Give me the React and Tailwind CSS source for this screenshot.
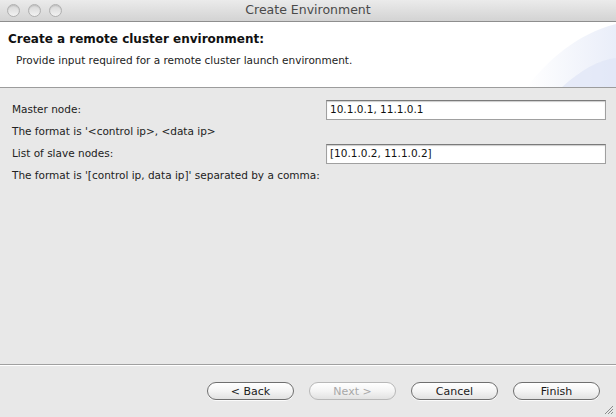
import React from 'react';

function TrafficLight() {
  return (
    <span className="w-[13px] h-[13px] rounded-full border border-[#b0b0b0] bg-gradient-to-b from-[#d6d6d6] to-[#f2f2f2] shadow-[inset_0_1px_1px_rgba(0,0,0,0.12)]" />
  );
}

function MacButton({ children, disabled }) {
  return (
    <button
      disabled={disabled}
      className={
        'w-[87px] h-[18px] rounded-full border text-[11px] leading-none flex items-center justify-center bg-gradient-to-b from-white via-[#f4f4f4] to-[#e2e2e2] ' +
        (disabled
          ? 'border-[#b8b8b8] text-[#a8a8a8]'
          : 'border-[#6f6f6f] text-[#1a1a1a] shadow-[0_1px_0_rgba(255,255,255,0.8)]')
      }
    >
      {children}
    </button>
  );
}

function Field({ label, value, hint }) {
  return (
    <>
      <div className="flex items-center h-[22px]">
        <span className="flex-1">{label}</span>
        <div className="w-[280px] h-[20px] bg-white border border-[#a0a0a0] border-t-[#7a7a7a] shadow-[inset_0_1px_1px_rgba(0,0,0,0.2)] flex items-center px-[3px] text-[#111]">
          {value}
        </div>
      </div>
      <div className="h-[22px] flex items-center">{hint}</div>
    </>
  );
}

export default function App() {
  return (
    <div
      className="w-[616px] h-[417px] flex flex-col bg-[#e8e8e8] text-[12px] text-[#222] overflow-hidden"
      style={{ fontFamily: '"Lucida Grande", "DejaVu Sans", sans-serif' }}
    >
      {/* Title bar */}
      <div className="h-[22px] shrink-0 flex items-center relative bg-gradient-to-b from-[#ebebeb] to-[#d3d3d3] border-b border-[#8e8e8e]">
        <div className="flex gap-[8px] pl-[7px]">
          <TrafficLight />
          <TrafficLight />
          <TrafficLight />
        </div>
        <div className="absolute inset-0 flex items-center justify-center text-[12.5px] text-[#4a4a4a]">
          Create Environment
        </div>
      </div>

      {/* Header */}
      <div className="h-[66px] shrink-0 bg-white relative overflow-hidden border-b border-[#9c9c9c]">
        <svg className="absolute right-0 top-0" width="100" height="66" viewBox="0 0 100 66">
          <defs>
            <linearGradient id="g1" x1="0" y1="0" x2="1" y2="0">
              <stop offset="0" stopColor="#ffffff" />
              <stop offset="1" stopColor="#dbe2f5" />
            </linearGradient>
          </defs>
          <path d="M10 66 C30 40 60 12 100 2 L100 66 Z" fill="url(#g1)" opacity="0.6" />
          <path d="M45 66 C65 48 82 38 100 36 L100 66 Z" fill="#e0e6f6" opacity="0.7" />
        </svg>
        <div className="relative pl-[8px] pt-[8px] font-bold text-[#111] text-[12px]">
          Create a remote cluster environment:
        </div>
        <div className="relative pl-[16px] pt-[5px] text-[10.5px] text-[#222]">
          Provide input required for a remote cluster launch environment.
        </div>
      </div>

      {/* Body */}
      <div className="flex-1 pl-[12px] pr-[10px] pt-[11px] text-[10.5px]">
        <Field label="Master node:" value="10.1.0.1, 11.1.0.1" hint="The format is '<control ip>, <data ip>" />
        <Field
          label="List of slave nodes:"
          value="[10.1.0.2, 11.1.0.2]"
          hint="The format is '[control ip, data ip]' separated by a comma:"
        />
      </div>

      {/* Footer */}
      <div className="h-[53px] shrink-0 border-t border-[#a0a0a0] shadow-[inset_0_1px_0_#ffffff] relative">
        <div className="flex justify-end gap-[15px] pr-[16px] pt-[17px]">
          <MacButton>&lt; Back</MacButton>
          <MacButton disabled>Next &gt;</MacButton>
          <MacButton>Cancel</MacButton>
          <MacButton>Finish</MacButton>
        </div>
        <svg className="absolute right-[2px] bottom-[2px]" width="11" height="11" viewBox="0 0 11 11">
          <path d="M10 2 L2 10 M10 5 L5 10 M10 8 L8 10" stroke="#8a8a8a" strokeWidth="1" />
        </svg>
      </div>
    </div>
  );
}
